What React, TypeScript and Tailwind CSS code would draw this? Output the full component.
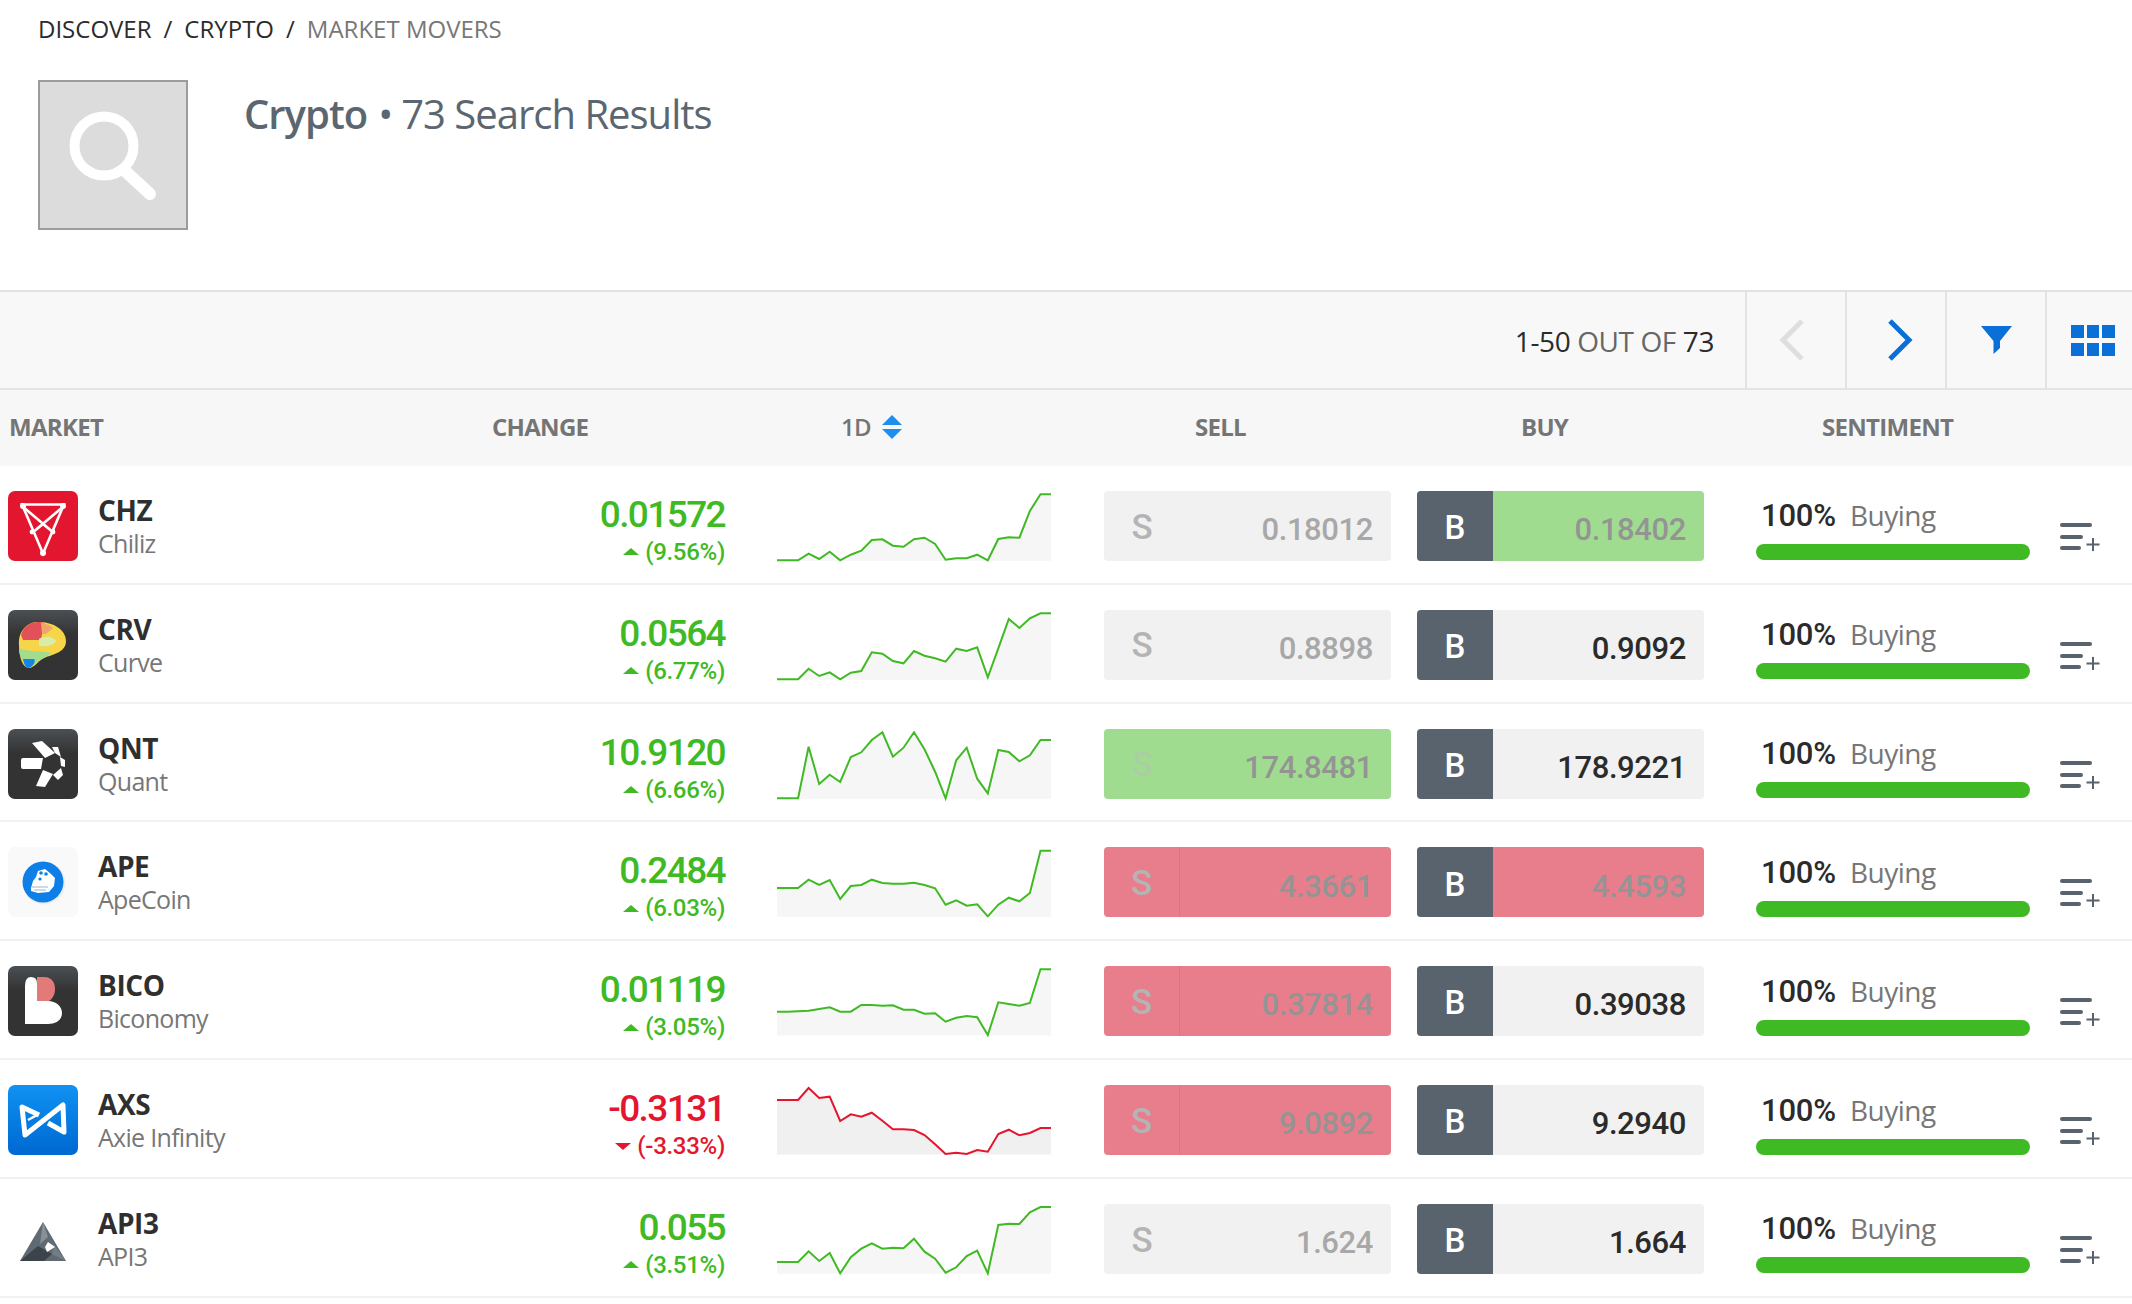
import { ReactNode } from 'react';

const GREEN = '#40ba24';
const RED = '#e3162f';

const open = "font-['Open_Sans',sans-serif]";
const din = "font-['Roboto',sans-serif]";

type Tone = 'plain' | 'up' | 'down';

type Row = {
    ticker: string;
    name: string;
    logo: ReactNode;
    value: string;
    pct: string;
    down?: boolean;
    sell: string;
    sellTone: Tone;
    sellDim?: boolean;
    buy: string;
    buyTone: Tone;
    top: number;
    line: number[];
};

function Logo({ bg, children }: { bg: string; children?: ReactNode }) {
    return (
        <div className={`w-[70px] h-[70px] shrink-0 rounded-[7px] overflow-hidden ${bg}`}>
            <svg viewBox="0 0 70 70" className="block w-[70px] h-[70px]">
                {children}
            </svg>
        </div>
    );
}

const dark = 'bg-gradient-to-b from-[#4b5055] to-[#333333] to-[35%]';

const chz = (
    <Logo bg="bg-[#e3162f]">
        <g stroke="#fff" strokeWidth="2.6" fill="none">
            <path d="M14 15H56L35 66Z" transform="translate(0 -1) scale(1 .96)" />
            <path d="M14 15L46 42M56 15L24 42M24 42L35 33L46 42" />
        </g>
        <g fill="#fff">
            <circle cx="15" cy="15" r="3" />
            <circle cx="55" cy="15" r="3" />
            <circle cx="35" cy="62" r="3" />
            <circle cx="24" cy="41" r="2.4" />
            <circle cx="45" cy="41" r="2.4" />
        </g>
    </Logo>
);

const crv = (
    <Logo bg={dark}>
        <path d="M11 35C10 20 20 12 30 12C46 12 58 20 58 31C58 42 46 44 36 48C30 51 26 58 21 58C15 58 11 48 11 35Z" fill="#f7d548" />
        <path d="M13 25C15 17 22 12 30 12C32 12 34 12 36 13L33 30L15 30Z" fill="#e2505a" />
        <path d="M33 13C36 13 42 15 45 18L38 24L34 24Z" fill="#f0a56c" />
        <path d="M31 29C37 25 46 27 48 31C45 36 37 37 31 36Z" fill="#d9ecaa" />
        <path d="M11 38C18 42 30 40 44 43L36 48C30 51 28 54 25 55L15 51C12 47 11 42 11 38Z" fill="#a3dc8e" />
        <path d="M15 49L26 49C28 50 26 56 21 58C18 58 16 55 15 49Z" fill="#1584e6" />
    </Logo>
);

const qnt = (
    <Logo bg={dark}>
        <g fill="#fff">
            <path d="M15 29H35L33 40H15Q13 40 13 38V31Q13 29 15 29Z" />
            <path d="M24 14L34 12L47 24L37 29Z" />
            <path d="M44 18L50 18L53 28L47 24Z" />
            <path d="M52 28L57 31L57 38L53 37Z" />
            <path d="M53 39L55 46L50 51L45 46Z" />
            <path d="M35 41L45 45L37 58L28 57Z" />
        </g>
    </Logo>
);

const ape = (
    <Logo bg="bg-[#f9f9f9]">
        <circle cx="36" cy="36" r="21.5" fill="#eeeeee" />
        <circle cx="35" cy="35" r="20.5" fill="#0e7fe6" />
        <path d="M23 41L25 34L28 30L30 24L37 22L43 27L47 31L46 39L41 45L30 46L23 44Z" fill="#fff" />
        <circle cx="33" cy="26" r="1.8" fill="#0e7fe6" />
        <circle cx="38" cy="27" r="1.8" fill="#0e7fe6" />
        <circle cx="32" cy="32" r="1.6" fill="#0e7fe6" />
        <path d="M24 40H40M26 43H38" stroke="#9db7d0" strokeWidth="1.2" />
    </Logo>
);

const bico = (
    <Logo bg={dark}>
        <path d="M29 11H36C44 11 47 17 47 23C47 29 44 33 41 35H29Z" fill="#e27a7a" />
        <path d="M17 20Q17 11 23 11Q29 11 29 17V35H40C48 35 54 40 54 47C54 54 48 58 40 58H17Z" fill="#fff" />
    </Logo>
);

const axs = (
    <Logo bg="bg-gradient-to-b from-[#1192f3] to-[#0068d1]">
        <path d="M31 30L14 22L17 50L55 20L56 47L40 38" fill="none" stroke="#fff" strokeWidth="5" strokeLinejoin="round" />
        <path d="M20 35L29 30" stroke="#fff" strokeWidth="2.5" />
    </Logo>
);

const api3 = (
    <Logo bg="bg-white">
        <path d="M35 18L58 57H12Z" fill="#5f6a74" />
        <path d="M35 18L40 33L32 40Z" fill="#8a8f94" />
        <path d="M12 57L30 42L44 50L36 57Z" fill="#3d434a" />
        <path d="M40 33L58 57L44 50L46 42Z" fill="#747c84" />
        <path d="M40 38L47 43L39 48L37 43Z" fill="#fff" />
    </Logo>
);

const rows: Row[] = [
    {
        ticker: 'CHZ', name: 'Chiliz', logo: chz, value: '0.01572', pct: '(9.56%)',
        sell: '0.18012', sellTone: 'plain', sellDim: true, buy: '0.18402', buyTone: 'up', top: 63,
        line: [271, 271, 271, 251, 267, 245, 271, 254, 242, 210, 208, 227, 230, 208, 203, 222, 269, 265, 265, 254, 271, 207, 202, 203, 123, 73, 73],
    },
    {
        ticker: 'CRV', name: 'Curve', logo: crv, value: '0.0564', pct: '(6.77%)',
        sell: '0.8898', sellTone: 'plain', sellDim: true, buy: '0.9092', buyTone: 'plain', top: 420,
        line: [628, 628, 628, 596, 618, 607, 628, 608, 603, 547, 551, 573, 580, 543, 557, 565, 575, 536, 543, 532, 622, 535, 447, 474, 445, 430, 430],
    },
    {
        ticker: 'QNT', name: 'Quant', logo: qnt, value: '10.9120', pct: '(6.66%)',
        sell: '174.8481', sellTone: 'up', buy: '178.9221', buyTone: 'plain', top: 57,
        line: [265, 265, 265, 110, 222, 194, 216, 141, 127, 90, 67, 140, 113, 67, 118, 185, 265, 151, 113, 206, 250, 120, 126, 154, 136, 90, 90],
    },
    {
        ticker: 'APE', name: 'ApeCoin', logo: ape, value: '0.2484', pct: '(6.03%)',
        sell: '4.3661', sellTone: 'down', buy: '4.4593', buyTone: 'down', top: 414,
        line: [537, 537, 537, 512, 528, 513, 570, 531, 528, 512, 522, 524, 524, 521, 528, 538, 587, 574, 590, 586, 622, 587, 566, 577, 552, 425, 425],
    },
    {
        ticker: 'BICO', name: 'Biconomy', logo: bico, value: '0.01119', pct: '(3.05%)',
        sell: '0.37814', sellTone: 'down', buy: '0.39038', buyTone: 'plain', top: 51,
        line: [188, 188, 187, 185, 180, 175, 188, 188, 168, 168, 170, 169, 182, 182, 194, 193, 218, 206, 201, 205, 258, 160, 165, 170, 162, 61, 61],
    },
    {
        ticker: 'AXS', name: 'Axie Infinity', logo: axs, value: '-0.3131', pct: '(-3.33%)', down: true,
        sell: '9.0892', sellTone: 'down', buy: '9.2940', buyTone: 'plain', top: 405,
        line: [450, 450, 450, 414, 444, 440, 513, 493, 500, 488, 512, 538, 538, 540, 555, 583, 612, 608, 612, 600, 605, 552, 539, 556, 549, 534, 534],
    },
    {
        ticker: 'API3', name: 'API3', logo: api3, value: '0.055', pct: '(3.51%)',
        sell: '1.624', sellTone: 'plain', sellDim: true, buy: '1.664', buyTone: 'plain', top: 762,
        line: [936, 936, 936, 904, 933, 909, 970, 922, 896, 880, 896, 893, 895, 866, 905, 926, 968, 952, 918, 902, 970, 825, 821, 822, 787, 771, 771],
    },
];

function Spark({ line, top, down }: { line: number[]; top: number; down?: boolean }) {
    const pts = line.map((v, i) => [(i * 274) / 26, (v - top) / 3]);
    const d = pts.map((p) => `${p[0].toFixed(1)},${p[1].toFixed(1)}`).join(' ');
    const base = (Math.max(...line) - top) / 3 + 0.5;
    return (
        <svg viewBox="0 0 274 70" className="block w-[274px] h-[70px] overflow-visible">
            <polygon points={`0,${base} ${d} 274,${base}`} fill={down ? '#f0f0f0' : '#f6f6f6'} />
            <polyline points={d} fill="none" stroke={down ? RED : GREEN} strokeWidth="2" />
        </svg>
    );
}

const toneBg: Record<Tone, string> = {
    plain: 'bg-[#f1f1f1]',
    up: 'bg-[#a0dc90]',
    down: 'bg-[#e87e8b]',
};

function Price({ kind, price, tone, dim }: { kind: 'S' | 'B'; price: string; tone: Tone; dim?: boolean }) {
    const priceColor = tone === 'plain' ? (dim ? 'text-[#a8a8a8]' : 'text-[#2b2b2b]') : 'text-[#949494]';
    return (
        <div className={`flex w-[287px] h-[70px] rounded-[4px] overflow-hidden ${toneBg[tone]}`}>
            {kind === 'B' ? (
                <div className={`flex items-center justify-center pt-[4px] w-[76px] bg-[#59636e] text-white text-[33px] font-medium ${din}`}>B</div>
            ) : (
                <div className={`flex items-center justify-center pt-[4px] w-[76px] text-[35px] font-medium ${din} ${tone === 'up' ? 'text-[#a9cfa0]' : 'text-[#b4b4b4]'} ${tone === 'down' ? 'border-r border-[#dd7280]' : ''}`}>S</div>
            )}
            <div className={`flex-1 pr-[18px] pt-[9px] flex items-center justify-end text-[31px] font-medium tracking-[-0.4px] ${din} ${priceColor}`}>{price}</div>
        </div>
    );
}

function ListAdd() {
    return (
        <svg viewBox="0 0 40 28" className="block w-[40px] h-[28px]">
            <g stroke="#59636e" strokeWidth="4" strokeLinecap="round">
                <path d="M2 2H30" />
                <path d="M2 14H21" />
                <path d="M2 25H19" />
            </g>
            <path d="M33 15V28M26.5 21.5H39.5" stroke="#59636e" strokeWidth="2" />
        </svg>
    );
}

function MarketRow({ row }: { row: Row }) {
    const color = row.down ? 'text-[#e3162f]' : 'text-[#40ba24]';
    return (
        <div className="flex items-center h-[118.83px] pt-[3px] border-b-2 border-[#f1f1f1]">
            <div className="flex items-center w-[540px] pl-[8px]">
                {row.logo}
                <div className="ml-[20px]">
                    <div className={`text-[28px] leading-[34px] font-bold tracking-[-0.4px] text-[#2f2f2f] ${open}`}>{row.ticker}</div>
                    <div className={`text-[25px] leading-[32px] tracking-[-0.7px] text-[#777777] ${open}`}>{row.name}</div>
                </div>
            </div>
            <div className={`w-[185px] mt-[8px] flex flex-col items-end ${din} ${color}`}>
                <div className="text-[37px] leading-[42px] font-medium tracking-[-1.6px]">{row.value}</div>
                <div className="flex items-center gap-[6px] mt-[2px] text-[24px] leading-[28px] font-medium tracking-[-0.3px]">
                    {row.down ? (
                        <span className="w-0 h-0 border-x-[8px] border-x-transparent border-t-[7px] border-t-[#e3162f]" />
                    ) : (
                        <span className="w-0 h-0 border-x-[8px] border-x-transparent border-b-[7px] border-b-[#40ba24]" />
                    )}
                    {row.pct}
                </div>
            </div>
            <div className="ml-[52px] w-[274px]">
                <Spark line={row.line} top={row.top} down={row.down} />
            </div>
            <div className="ml-[53px]">
                <Price kind="S" price={row.sell} tone={row.sellTone} dim={row.sellDim} />
            </div>
            <div className="ml-[26px]">
                <Price kind="B" price={row.buy} tone={row.buyTone} />
            </div>
            <div className="ml-[52px] w-[274px]">
                <div className="flex items-baseline pl-[5px] pt-[4px] h-[53px]">
                    <span className={`text-[31px] leading-[40px] font-medium text-[#2b2b2b] tracking-[-0.2px] ${din}`}>100%</span>
                    <span className={`ml-[14px] text-[28px] leading-[40px] text-[#777777] tracking-[-0.5px] ${open}`}>Buying</span>
                </div>
                <div className="h-[16px] rounded-full bg-[#40ba24]" />
            </div>
            <div className="ml-[30px] mt-[22px]">
                <ListAdd />
            </div>
        </div>
    );
}

export default function App() {
    return (
        <div className={`w-[2132px] h-[1304px] overflow-hidden bg-white ${open}`}>
            {/* Breadcrumb */}
            <div className="pl-[38px] pt-[12px] h-[80px] text-[24px] leading-[34px]">
                <span className="text-[#2b2b2b]">DISCOVER</span>
                <span className="text-[#2b2b2b] mx-[12px]">/</span>
                <span className="text-[#2b2b2b]">CRYPTO</span>
                <span className="text-[#2b2b2b] mx-[12px]">/</span>
                <span className="text-[#777777]">MARKET MOVERS</span>
            </div>

            {/* Title */}
            <div className="flex pl-[38px] h-[210px]">
                <div className="flex items-center justify-center w-[150px] h-[150px] bg-[#dcdcdc] border-2 border-[#9c9c9c]">
                    <svg viewBox="0 0 90 90" className="w-[90px] h-[90px]">
                        <circle cx="36" cy="36" r="29.5" fill="none" stroke="#fff" strokeWidth="10" />
                        <path d="M56 60L82 84" stroke="#fff" strokeWidth="12" strokeLinecap="round" />
                    </svg>
                </div>
                <div className="ml-[56px] pt-[6px] text-[40px] leading-[56px] tracking-[-1px] text-[#5b6670]">
                    <span className="font-semibold">Crypto</span>
                    <span className="ml-[11px] mr-[9px]">•</span>
                    <span>73 Search Results</span>
                </div>
            </div>

            {/* Toolbar */}
            <div className="flex justify-end h-[100px] bg-[#f8f8f8] border-y-2 border-[#e3e3e3]">
                <div className="flex items-center pt-[2px] pr-[31px] text-[28px] tracking-[-0.4px] text-[#2b2b2b]">
                    1-50&nbsp;<span className="text-[#666666]">OUT OF</span>&nbsp;73
                </div>
                <div className="flex items-center justify-center pr-[8px] w-[100px] border-l-2 border-[#e3e3e3]">
                    <svg viewBox="0 0 26 42" className="w-[26px] h-[42px]">
                        <path d="M23 2L4 21L23 40" fill="none" stroke="#dedede" strokeWidth="5" />
                    </svg>
                </div>
                <div className="flex items-center justify-center pl-[8px] w-[100px] border-l-2 border-[#e3e3e3]">
                    <svg viewBox="0 0 26 42" className="w-[26px] h-[42px]">
                        <path d="M3 2L22 21L3 40" fill="none" stroke="#0a6fd6" strokeWidth="5" />
                    </svg>
                </div>
                <div className="flex items-center justify-center w-[100px] border-l-2 border-[#e3e3e3]">
                    <svg viewBox="0 0 31 28" className="w-[31px] h-[28px]">
                        <path d="M0 0H31L19 15V22L12.5 28V15Z" fill="#0a6fd6" />
                    </svg>
                </div>
                <div className="flex items-center justify-start pl-[24px] w-[87px] border-l-2 border-[#e3e3e3]">
                    <div className="grid grid-cols-3 gap-x-[3px] gap-y-[5px] w-[44px]">
                        {[0, 1, 2, 3, 4, 5].map((i) => (
                            <div key={i} className="h-[13px] bg-[#0a6fd6]" />
                        ))}
                    </div>
                </div>
            </div>

            {/* Column headers */}
            <div className="flex items-center pb-[2px] h-[76px] bg-[#f7f7f7] text-[24px] font-bold tracking-[-0.7px] text-[#757575]">
                <div className="w-[492px] pl-[9px]">MARKET</div>
                <div className="w-[349px]">CHANGE</div>
                <div className="w-[354px] flex items-center gap-[11px]">
                    <span className="font-semibold">1D</span>
                    <svg viewBox="0 0 20 24" className="w-[20px] h-[24px]">
                        <path d="M10 0L20 10H0Z" fill="#1e8fee" />
                        <path d="M10 24L20 14H0Z" fill="#1e8fee" />
                    </svg>
                </div>
                <div className="w-[326px]">SELL</div>
                <div className="w-[301px]">BUY</div>
                <div>SENTIMENT</div>
            </div>

            {rows.map((row) => (
                <MarketRow key={row.ticker} row={row} />
            ))}
        </div>
    );
}
